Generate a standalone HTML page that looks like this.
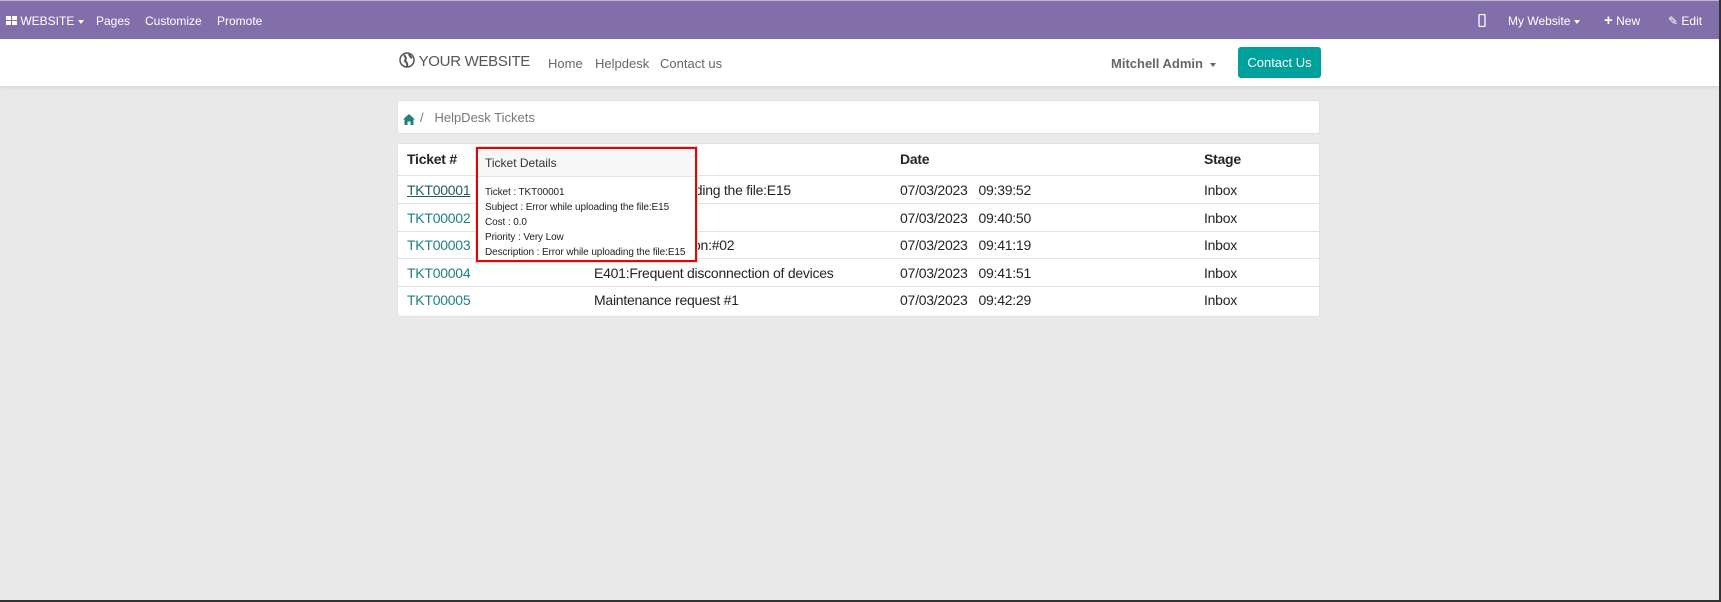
<!DOCTYPE html>
<html><head><style>
*{box-sizing:border-box;margin:0;padding:0}
body{width:1721px;height:602px;background:#e9e9e9;font-family:"Liberation Sans",sans-serif;position:relative;overflow:hidden;border-right:2px solid #333;border-bottom:2px solid #333}
.a{position:absolute;white-space:nowrap}
#top{position:absolute;left:0;top:0;width:100%;height:39px;background:#826eab;border-top:1px solid #bbb}
#top .a{color:#fff;font-size:12px;top:13px}
#hdr{position:absolute;left:0;top:39px;width:100%;height:47px;background:#fff;box-shadow:0 2px 3px rgba(0,0,0,.08)}
.card{position:absolute;background:#fff;border:1px solid #dee2e6;border-radius:3px}
.r{position:absolute;left:397px;width:923px;height:1px;background:#dee2e6}
.t{font-size:14px;color:#212529;letter-spacing:-0.25px}
.lk{color:#217f7f}
.caret{display:inline-block;border-left:3px solid transparent;border-right:3px solid transparent;border-top:4px solid currentColor;vertical-align:middle;margin-left:4px}
</style></head><body>
<div id="top">
 <div class="a" style="left:6px"><svg width="11" height="10" style="vertical-align:-1px"><rect x="0" y="0" width="5" height="4" fill="#fff"/><rect x="6" y="0" width="5" height="4" fill="#fff"/><rect x="0" y="5" width="5" height="4" fill="#fff"/><rect x="6" y="5" width="5" height="4" fill="#fff"/></svg> WEBSITE<span class="caret"></span></div>
 <div class="a" style="left:96px">Pages</div>
 <div class="a" style="left:145px">Customize</div>
 <div class="a" style="left:217px">Promote</div>
 <div class="a" style="left:1478px"><svg width="8" height="13" style="vertical-align:-2px"><rect x="1" y="0.5" width="6" height="12" rx="1" fill="none" stroke="#fff" stroke-width="1.3"/></svg></div>
 <div class="a" style="left:1508px">My Website<span class="caret"></span></div>
 <div class="a" style="left:1604px"><b style="font-size:15px;line-height:10px">+</b> New</div>
 <div class="a" style="left:1668px">✎ Edit</div>
</div>
<div id="hdr">
 <div class="a" style="left:399px;top:13px;font-size:15px;color:#555;letter-spacing:-0.3px"><svg width="16" height="16" style="vertical-align:-2px"><circle cx="8" cy="8" r="7" fill="none" stroke="#555" stroke-width="1.5"/><path d="M5 3 Q8 6 6 9 Q9 11 8 15 M10 2 Q11 5 13 6" stroke="#555" stroke-width="2" fill="none"/></svg> YOUR WEBSITE</div>
 <div class="a" style="left:548px;top:17px;font-size:13px;color:#666">Home</div>
 <div class="a" style="left:595px;top:17px;font-size:13px;color:#666">Helpdesk</div>
 <div class="a" style="left:660px;top:17px;font-size:13px;color:#666">Contact us</div>
 <div class="a" style="left:1111px;top:17px;font-size:13px;color:#666;font-weight:bold">Mitchell Admin<span class="caret" style="margin-left:7px"></span></div>
 <div class="a" style="left:1238px;top:8px;width:83px;height:31px;background:#00a09d;border-radius:3px;color:#fff;font-size:13px;text-align:center;line-height:31px">Contact Us</div>
</div>
<div class="card" style="left:397px;top:100px;width:923px;height:34px">
 <div class="a" style="left:5px;top:11px"><svg width="12" height="11"><path d="M6 0 L12 5.5 L10.5 5.5 L10.5 11 L7.5 11 L7.5 7.5 L4.5 7.5 L4.5 11 L1.5 11 L1.5 5.5 L0 5.5 Z" fill="#217f7f"/></svg></div>
 <div class="a" style="left:22px;top:9px;font-size:13px;color:#777">/ &nbsp;&nbsp;HelpDesk Tickets</div>
</div>
<div class="card" style="left:397px;top:143px;width:923px;height:174px"></div>
<div class="r" style="top:175px"></div><div class="r" style="top:203px"></div><div class="r" style="top:231px"></div><div class="r" style="top:258px"></div><div class="r" style="top:286px"></div>
<div class="a t" style="left:407px;top:151px;font-weight:bold">Ticket #</div>
<div class="a t" style="left:900px;top:151px;font-weight:bold">Date</div>
<div class="a t" style="left:1204px;top:151px;font-weight:bold">Stage</div>
<div class="a t" style="left:407px;top:182px;text-decoration:underline;color:#1d5f5f">TKT00001</div>
<div class="a t lk" style="left:407px;top:210px">TKT00002</div>
<div class="a t lk" style="left:407px;top:237px">TKT00003</div>
<div class="a t lk" style="left:407px;top:265px">TKT00004</div>
<div class="a t lk" style="left:407px;top:292px">TKT00005</div>
<div class="a t" style="left:594px;top:182px">Error while uploading the file:E15</div>
<div class="a t" style="left:594px;top:210px">Network issue</div>
<div class="a t" style="left:594px;top:237px">Product Installation:#02</div>
<div class="a t" style="left:594px;top:265px">E401:Frequent disconnection of devices</div>
<div class="a t" style="left:594px;top:292px">Maintenance request #1</div>
<div class="a t" style="left:900px;top:182px">07/03/2023 &nbsp; 09:39:52</div>
<div class="a t" style="left:900px;top:210px">07/03/2023 &nbsp; 09:40:50</div>
<div class="a t" style="left:900px;top:237px">07/03/2023 &nbsp; 09:41:19</div>
<div class="a t" style="left:900px;top:265px">07/03/2023 &nbsp; 09:41:51</div>
<div class="a t" style="left:900px;top:292px">07/03/2023 &nbsp; 09:42:29</div>
<div class="a t" style="left:1204px;top:182px">Inbox</div>
<div class="a t" style="left:1204px;top:210px">Inbox</div>
<div class="a t" style="left:1204px;top:237px">Inbox</div>
<div class="a t" style="left:1204px;top:265px">Inbox</div>
<div class="a t" style="left:1204px;top:292px">Inbox</div>
<div class="a" style="left:476px;top:147px;width:221px;height:115px;background:#fff;border:2px solid #e00;box-shadow:0 0 0 1px #ddd">
 <div style="height:28px;background:#f7f7f7;border-bottom:1px solid #e5e5e5;font-size:12px;color:#333;padding:7px 0 0 7px">Ticket Details</div>
 <div style="font-size:10px;color:#222;padding:8px 0 0 7px;line-height:15px;letter-spacing:-0.1px">Ticket : TKT00001<br>Subject : Error while uploading the file:E15<br>Cost : 0.0<br>Priority : Very Low<br>Description : Error while uploading the file:E15</div>
</div>
</body></html>
